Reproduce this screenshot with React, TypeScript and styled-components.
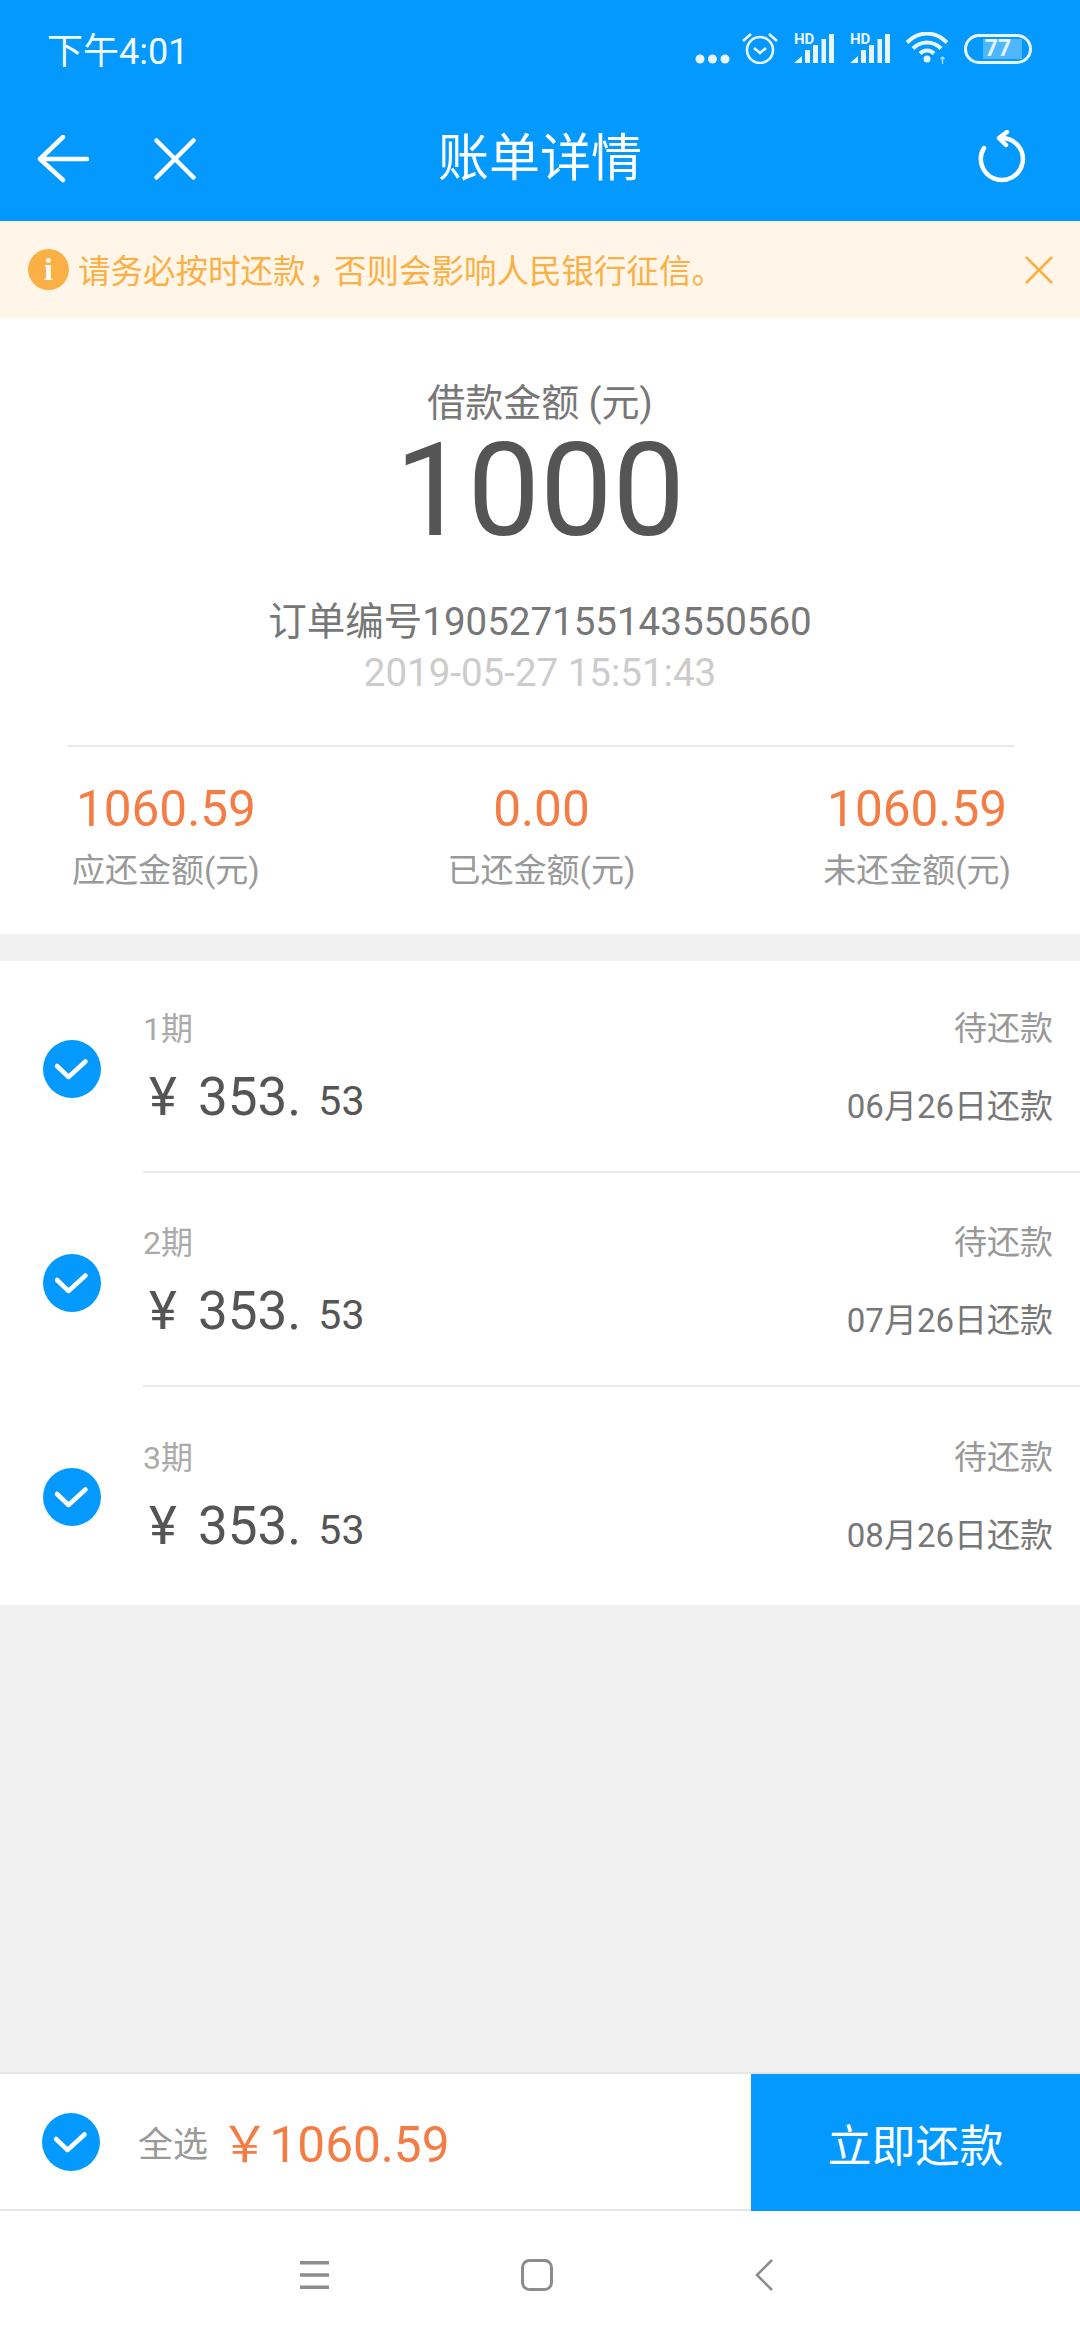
import styled, { createGlobalStyle } from 'styled-components';

const BLUE = '#0399ff';
const ORANGE = '#f47d45';
const AMBER = '#fbb045';
const ICON_WHITE = '#e8f5ff';
const FONT = 'Roboto, "Noto Sans CJK SC", sans-serif';

const periods = [
  { id: 1, due: '06月26日还款' },
  { id: 2, due: '07月26日还款' },
  { id: 3, due: '08月26日还款' },
];

const stats = [
  { value: '1060.59', label: '应还金额(元)' },
  { value: '0.00', label: '已还金额(元)' },
  { value: '1060.59', label: '未还金额(元)' },
];

function Signal() {
  return (
    <svg width="40" height="35" viewBox="0 -5 40 35" fill={ICON_WHITE}>
      <text x="0" y="10" fontSize="15" fontWeight="700" fontFamily="Roboto, sans-serif">HD</text>
      <path d="M0 29l8-7v7zM11 16h5v13h-5zM19 11h5v18h-5zM27.500 5h4.500v24h-4.500zM35 0h5v29h-5z" />
    </svg>
  );
}

function CheckCircle() {
  return (
    <svg width="58" height="58" viewBox="0 0 58 58">
      <circle cx="29" cy="29" r="29" fill={BLUE} />
      <path d="M14 26l11.500 11L42.500 21.500" fill="none" stroke="#fff" strokeWidth="4.5" strokeLinecap="round" strokeLinejoin="round" />
    </svg>
  );
}

export default function App() {
  return (
    <>
      <GlobalStyle />
      <Page>
        <Header>
          <StatusBar>
            <StatusTime>下午4:01</StatusTime>
            <StatusIcons>
              <Dots width="35" height="10" viewBox="0 0 35 10" fill={ICON_WHITE}>
                <circle cx="5" cy="5" r="4.500" />
                <circle cx="17.500" cy="5" r="4.500" />
                <circle cx="30" cy="5" r="4.500" />
              </Dots>
              <svg width="36" height="32" viewBox="0 0 36 32" fill="none" stroke={ICON_WHITE} strokeWidth="2.6">
                <circle cx="18" cy="18" r="13" />
                <path d="M12 16l6 5 6-5M1 9l8-7M35 9l-8-7" />
              </svg>
              <Signal />
              <Signal />
              <svg width="42" height="32" viewBox="0 0 42 32" fill="none" stroke={ICON_WHITE} strokeWidth="4">
                <path d="M1 10.500c12-12 28-12 40 0M7 16.500c8-8 20-8 28 0M14 21.500c4-4 10-4 14 0" />
                <circle cx="21" cy="27" r="3.500" fill={ICON_WHITE} stroke="none" />
                <path d="M36.500 25v7M34.500 27l2-2 2 2" strokeWidth="1.500" opacity="0.7" />
              </svg>
              <Battery>
                <BatteryFill />
                <BatteryText>77</BatteryText>
              </Battery>
            </StatusIcons>
          </StatusBar>
          <NavBar>
            <NavSide>
              <svg width="52" height="48" viewBox="0 0 52 48" fill="none" stroke="#fff" strokeWidth="4.500" strokeLinecap="round" strokeLinejoin="round">
                <path d="M26 2L3 24l23 21M3 24h47" />
              </svg>
              <svg width="42" height="42" viewBox="0 0 42 42" fill="none" stroke="#fff" strokeWidth="4.500" strokeLinecap="round">
                <path d="M2.500 2.500l37 37M39.500 2.500l-37 37" />
              </svg>
            </NavSide>
            <NavTitle>账单详情</NavTitle>
            <NavRight>
              <svg width="50" height="54" viewBox="0 0 50 54" fill="none" stroke="#fff" strokeWidth="4.500" strokeLinecap="round" strokeLinejoin="round">
                <path d="M7 18a21 21 0 1 0 18-10h-2" />
                <path d="M30 2l-8 6 7 7" />
              </svg>
            </NavRight>
          </NavBar>
        </Header>

        <Notice>
          <NoticeIcon>i</NoticeIcon>
          <NoticeText>
            请务必按时还款<NoticeComma>，</NoticeComma>否则会影响人民银行征信。
          </NoticeText>
          <svg width="30" height="28" viewBox="0 0 30 28" fill="none" stroke={AMBER} strokeWidth="2.600">
            <path d="M2 1l26 26M28 1L2 27" />
          </svg>
        </Notice>

        <Summary>
          <SummaryLabel>借款金额 (元)</SummaryLabel>
          <SummaryAmount>1000</SummaryAmount>
          <OrderNo>订单编号190527155143550560</OrderNo>
          <OrderDate>2019-05-27 15:51:43</OrderDate>
          <Stats>
            {stats.map((stat) => (
              <Stat key={stat.label}>
                <StatValue>{stat.value}</StatValue>
                <StatLabel>{stat.label}</StatLabel>
              </Stat>
            ))}
          </Stats>
        </Summary>

        <PeriodList>
          {periods.map((period) => (
            <PeriodRow key={period.id}>
              <CheckCircle />
              <PeriodBody>
                <PeriodLine>
                  <PeriodName>{period.id}期</PeriodName>
                  <PeriodStatus>待还款</PeriodStatus>
                </PeriodLine>
                <PeriodLine>
                  <PeriodAmount>
                    <Yen>¥</Yen>
                    <Whole>353.</Whole>
                    <Cents>53</Cents>
                  </PeriodAmount>
                  <PeriodDue>{period.due}</PeriodDue>
                </PeriodLine>
              </PeriodBody>
            </PeriodRow>
          ))}
        </PeriodList>

        <Spacer />

        <Footer>
          <SelectAll>
            <CheckCircle />
            <SelectLabel>全选</SelectLabel>
            <Total>￥1060.59</Total>
          </SelectAll>
          <PayButton>立即还款</PayButton>
        </Footer>

        <SystemNav>
          <svg width="29" height="28" viewBox="0 0 29 28" fill="#8c8c8c">
            <path d="M0 0h29v3.500H0zM0 12.250h29v3.500H0zM0 24.500h29V28H0z" />
          </svg>
          <svg width="32" height="32" viewBox="0 0 32 32" fill="none" stroke="#8c8c8c" strokeWidth="3">
            <rect x="1.500" y="1.500" width="29" height="29" rx="7" />
          </svg>
          <BackKey width="18" height="32" viewBox="0 0 18 32" fill="none" stroke="#8c8c8c" strokeWidth="2.600">
            <path d="M17 1L2 16l15 15" />
          </BackKey>
        </SystemNav>
      </Page>
    </>
  );
}

const GlobalStyle = createGlobalStyle`
  html, body {
    margin: 0;
    padding: 0;
    background: #f1f1f1;
  }
  * {
    box-sizing: border-box;
  }
`;

const Page = styled.div`
  display: flex;
  flex-direction: column;
  width: 1080px;
  height: 2340px;
  font-family: ${FONT};
  background: #f1f1f1;
  overflow: hidden;
`;

const Header = styled.header`
  height: 221px;
  background: ${BLUE};
  color: #fff;
`;

const StatusBar = styled.div`
  display: flex;
  justify-content: space-between;
  align-items: center;
  height: 96px;
  padding: 0 48px 0 47px;
`;

const StatusTime = styled.span`
  font-size: 36px;
  color: #f2f9ff;
`;

const StatusIcons = styled.div`
  display: flex;
  align-items: flex-end;
  gap: 16px;
  margin-bottom: 4px;
`;

const Dots = styled.svg`
  margin-right: -4px;
`;

const Battery = styled.div`
  position: relative;
  width: 68px;
  height: 30px;
  border: 3px solid ${ICON_WHITE};
  border-radius: 15px;
`;

const BatteryFill = styled.div`
  position: absolute;
  left: 16px;
  top: 2px;
  width: 39px;
  height: 20px;
  background: rgba(255, 255, 255, 0.3);
`;

const BatteryText = styled.span`
  position: absolute;
  inset: 0;
  text-align: center;
  font-size: 23px;
  line-height: 24px;
  font-weight: 700;
  color: ${ICON_WHITE};
`;

const NavBar = styled.nav`
  display: grid;
  grid-template-columns: 1fr auto 1fr;
  align-items: center;
  height: 125px;
  padding: 0 53px 0 37px;
`;

const NavSide = styled.div`
  display: flex;
  align-items: center;
  gap: 65px;
`;

const NavTitle = styled.h1`
  margin: 0 0 0 16px;
  font-size: 51px;
  font-weight: 400;
  line-height: 60px;
`;

const NavRight = styled.div`
  display: flex;
  justify-content: flex-end;
  margin-bottom: 3px;
`;

const Notice = styled.div`
  display: flex;
  align-items: center;
  height: 97px;
  padding: 0 26px 0 28px;
  background: #fff6e9;
`;

const NoticeIcon = styled.span`
  flex: none;
  width: 41px;
  height: 41px;
  margin-right: 9px;
  border-radius: 50%;
  background: ${AMBER};
  color: #fff;
  font-family: "Liberation Serif", serif;
  font-size: 32px;
  font-weight: 700;
  line-height: 41px;
  text-align: center;
`;

const NoticeText = styled.span`
  flex: 1;
  margin-bottom: 3px;
  font-size: 32.500px;
  color: ${AMBER};
`;

const NoticeComma = styled.span`
  margin-left: 3px;
  letter-spacing: -7px;
`;

const Summary = styled.section`
  display: flex;
  flex-direction: column;
  align-items: center;
  height: 616px;
  padding-top: 55px;
  background: #fff;
`;

const SummaryLabel = styled.div`
  font-size: 38px;
  line-height: 60px;
  color: #777;
`;

const SummaryAmount = styled.div`
  margin-top: 8px;
  font-size: 129px;
  line-height: 100px;
  color: #555;
`;

const OrderNo = styled.div`
  margin-top: 56px;
  font-size: 38.500px;
  line-height: 50px;
  color: #777;
`;

const OrderDate = styled.div`
  margin-top: 1px;
  font-size: 38.500px;
  line-height: 50px;
  color: #ccc;
`;

const Stats = styled.div`
  display: flex;
  justify-content: space-between;
  align-self: stretch;
  margin: 47px 66px 0 68px;
  padding: 32px 3px 0 4px;
  border-top: 2px solid #e8e8e8;
`;

const Stat = styled.div`
  display: flex;
  flex-direction: column;
  align-items: center;
`;

const StatValue = styled.div`
  font-size: 49.500px;
  line-height: 60px;
  color: ${ORANGE};
`;

const StatLabel = styled.div`
  margin-top: 2px;
  font-size: 33px;
  line-height: 60px;
  color: #999;
`;

const PeriodList = styled.section`
  margin-top: 27px;
  padding: 1px 0;
  background: #fff;
`;

const PeriodRow = styled.div`
  display: flex;
  align-items: center;
  height: 214px;
  padding-left: 43px;
`;

const PeriodBody = styled.div`
  flex: 1;
  display: flex;
  flex-direction: column;
  justify-content: center;
  gap: 16px;
  align-self: flex-start;
  height: 211px;
  margin-left: 42px;
  padding: 0 27px 4px 0;
  border-bottom: 2px solid #e8e8e8;

  ${PeriodRow}:last-child & {
    border-bottom: none;
  }
`;

const PeriodLine = styled.div`
  display: flex;
  justify-content: space-between;
  align-items: center;
`;

const PeriodName = styled.span`
  font-size: 32px;
  color: #aaa;
`;

const PeriodStatus = styled.span`
  font-size: 33px;
  color: #999;
`;

const PeriodAmount = styled.div`
  display: flex;
  align-items: baseline;
  color: #555;
`;

const Yen = styled.span`
  width: 55px;
  padding-left: 6px;
  font-size: 53px;
`;

const Whole = styled.span`
  font-size: 53px;
`;

const Cents = styled.span`
  margin-left: 17px;
  font-size: 41px;
`;

const PeriodDue = styled.span`
  margin-top: 14px;
  font-size: 33px;
  color: #777;
`;

const Spacer = styled.div`
  flex: 1;
`;

const Footer = styled.div`
  display: flex;
  align-items: stretch;
  height: 139px;
  border-top: 2px solid #e6e6e6;
  background: #fff;
`;

const SelectAll = styled.div`
  flex: 1;
  display: flex;
  align-items: center;
  padding-left: 42px;
  border-bottom: 2px solid #e6e6e6;
`;

const SelectLabel = styled.span`
  margin-left: 38px;
  font-size: 35px;
  color: #999;
`;

const Total = styled.span`
  margin: 0 0 3px 12px;
  font-size: 49.500px;
  color: ${ORANGE};
`;

const PayButton = styled.button`
  width: 329px;
  border: none;
  background: ${BLUE};
  color: #fff;
  font-family: ${FONT};
  font-size: 44px;
`;

const SystemNav = styled.div`
  display: flex;
  align-items: center;
  gap: 192px;
  height: 129px;
  padding: 0 0 2px 300px;
  background: #fff;
`;

const BackKey = styled.svg`
  margin-left: 10px;
`;
